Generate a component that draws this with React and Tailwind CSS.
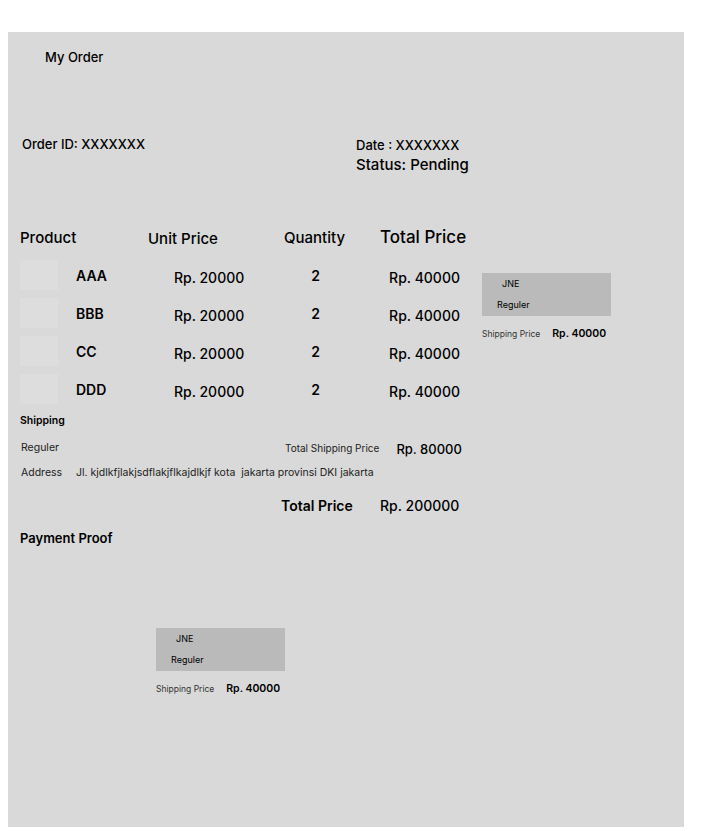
import React from 'react';

const items = [
  { name: 'AAA', price: 'Rp. 20000', qty: 2, total: 'Rp. 40000' },
  { name: 'BBB', price: 'Rp. 20000', qty: 2, total: 'Rp. 40000' },
  { name: 'CC', price: 'Rp. 20000', qty: 2, total: 'Rp. 40000' },
  { name: 'DDD', price: 'Rp. 20000', qty: 2, total: 'Rp. 40000' },
];

function ShippingCard() {
  return (
    <div className="w-[129px] whitespace-nowrap">
      <div className="h-[43px] bg-[#bababa] flex flex-col pt-[5px]">
        <span className="pl-[20px] text-[9px] leading-[12px]">JNE</span>
        <span className="pl-[15px] text-[9px] leading-[12px] mt-[9px]">Reguler</span>
      </div>
      <div className="flex items-center mt-[10px]">
        <span className="text-[8.5px] text-[#333]">Shipping Price</span>
        <span className="ml-[12px] text-[10.5px] font-semibold">Rp. 40000</span>
      </div>
    </div>
  );
}

export default function App() {
  return (
    <div className="min-h-screen bg-white font-['Inter',sans-serif] text-black pt-8 pl-2">
      <div className="w-[676px] h-[795px] bg-[#d9d9d9] flex flex-col whitespace-nowrap">
        <div className="pl-[37px] pt-[17px] text-[13px] leading-[16px] font-medium">My Order</div>

        <div className="flex pl-[14px] mt-[70px]">
          <div className="w-[334px] text-[13px] leading-[16px] font-medium pt-[1px]">Order ID: XXXXXXX</div>
          <div className="flex flex-col">
            <span className="text-[13px] leading-[16px] font-medium pt-[2px]">Date : XXXXXXX</span>
            <span className="text-[15px] leading-[18px] font-medium mt-[3px]">Status: Pending</span>
          </div>
        </div>

        <div className="flex items-center pl-[12px] mt-[52px] h-[24px]">
          <span className="w-[128px] text-[15px] font-medium">Product</span>
          <span className="w-[136px] text-[15px] font-medium pt-[2px]">Unit Price</span>
          <span className="w-[96px] text-[15px] font-medium">Quantity</span>
          <span className="text-[17px] font-medium">Total Price</span>
        </div>

        <div className="flex pl-[12px] mt-[10px]">
          <div className="w-[440px] flex flex-col gap-[8px]">
            {items.map((it) => (
              <div key={it.name} className="flex items-center h-[30px]">
                <div className="w-[128px] flex items-center">
                  <div className="w-[38px] h-[30px] bg-[#dddddd]"></div>
                  <span className="ml-[18px] text-[14px] font-semibold">{it.name}</span>
                </div>
                <span className="w-[136px] pl-[28px] text-[14px] font-medium pt-[4px]">{it.price}</span>
                <span className="w-[96px] pl-[31px] text-[14px] font-semibold">{it.qty}</span>
                <span className="pl-[14px] text-[14px] font-medium pt-[4px]">{it.total}</span>
              </div>
            ))}
          </div>
          <div className="ml-[22px] mt-[13px]">
            <ShippingCard />
          </div>
        </div>

        <div className="pl-[12px] mt-[10px] text-[10.5px] leading-[14px] font-semibold">Shipping</div>

        <div className="flex items-center pl-[13px] mt-[12px] h-[16px]">
          <span className="w-[264px] text-[10.5px] text-[#222]">Reguler</span>
          <span className="text-[10px] text-[#222]">Total Shipping Price</span>
          <span className="ml-[17px] text-[13px] font-medium pt-[3px]">Rp. 80000</span>
        </div>

        <div className="flex items-center pl-[13px] mt-[9px] h-[16px] text-[10.5px] text-[#222]">
          <span className="w-[55px]">Address</span>
          <span>Jl. kjdlkfjlakjsdflakjflkajdlkjf kota&nbsp; jakarta provinsi DKI jakarta</span>
        </div>

        <div className="flex items-center pl-[273px] mt-[15px] h-[18px] text-[14px]">
          <span className="w-[99px] font-semibold">Total Price</span>
          <span className="font-medium">Rp. 200000</span>
        </div>

        <div className="pl-[12px] mt-[15px] text-[13px] leading-[18px] font-semibold">Payment Proof</div>

        <div className="pl-[148px] mt-[81px]">
          <ShippingCard />
        </div>
      </div>
    </div>
  );
}
